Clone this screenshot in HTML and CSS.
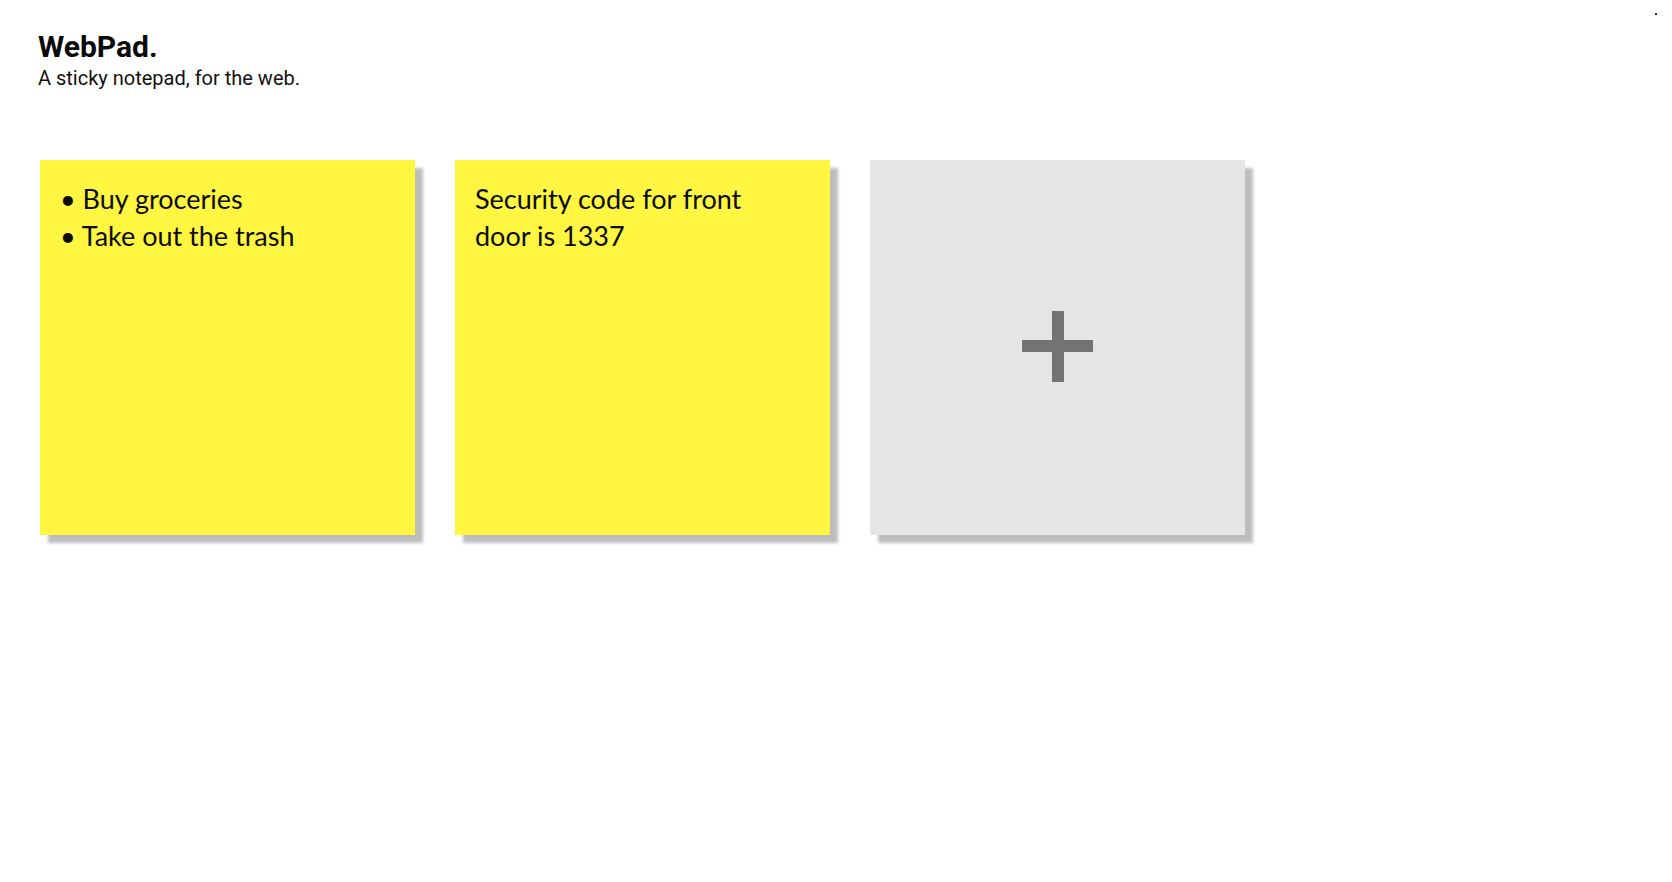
FILE: index.html
```html
<!DOCTYPE html>
<html lang="en">
<head>
<meta charset="utf-8">
<title>WebPad</title>
<link rel="stylesheet" href="styles.css">
</head>
<body>
<span class="corner-dot"></span>
<header class="header">
  <h1 class="title">WebPad.</h1>
  <p class="subtitle">A sticky notepad, for the web.</p>
</header>
<main class="board">
  <div class="note note-yellow"><div class="note-text">• Buy groceries<br>• Take out the trash</div></div>
  <div class="note note-yellow"><div class="note-text">Security code for front door is 1337</div></div>
  <div class="note note-add">
    <span class="plus"><span class="plus-h"></span><span class="plus-v"></span></span>
  </div>
</main>
</body>
</html>
```
FILE: styles.css
```css
html, body {
  margin: 0;
  padding: 0;
  background: #ffffff;
}
body {
  font-family: Roboto, "Liberation Sans", sans-serif;
  color: #111111;
  min-height: 882px;
}
.corner-dot {
  position: absolute;
  top: 13px;
  left: 1655px;
  width: 2px;
  height: 2px;
  background: #333;
}
.header {
  padding: 29px 38px 0 38px;
}
.title {
  margin: 0;
  font-size: 30px;
  font-weight: 700;
  line-height: 36px;
  color: #0a0a0a;
}
.subtitle {
  margin: 0;
  font-size: 20px;
  line-height: 27px;
  color: #111;
}
.board {
  display: flex;
  gap: 40px;
  padding: 68px 40px 40px 40px;
}
.note {
  flex: none;
  width: 375px;
  height: 375px;
  box-sizing: border-box;
  padding: 21px 40px 20px 20px;
  box-shadow: 8px 8px 3px rgba(0, 0, 0, 0.26);
}
.note-yellow {
  background: #fff641;
}
.note-text {
  font-family: Lato, "Open Sans", sans-serif;
  font-size: 27px;
  line-height: 36.5px;
  color: #0c0c00;
}
.note-add {
  background: #e5e5e5;
  display: flex;
  align-items: center;
  justify-content: center;
  padding: 0;
}
.plus {
  position: relative;
  width: 71px;
  height: 71px;
  margin-bottom: 3px;
}
.plus-h {
  position: absolute;
  left: 0;
  top: 29.5px;
  width: 71px;
  height: 12px;
  background: #737373;
}
.plus-v {
  position: absolute;
  left: 29.5px;
  top: 0;
  width: 12px;
  height: 71px;
  background: #737373;
}
```
